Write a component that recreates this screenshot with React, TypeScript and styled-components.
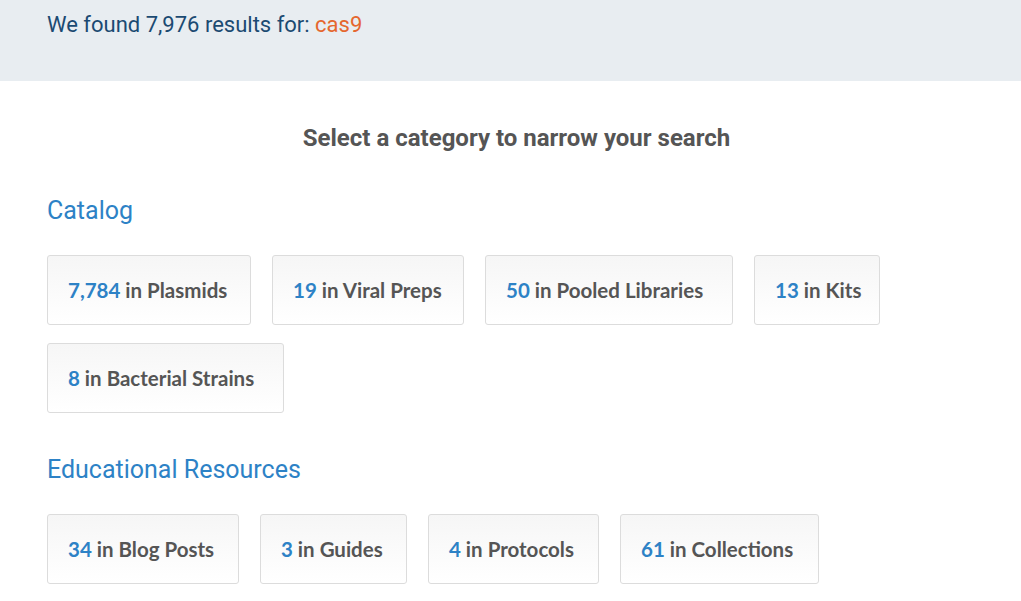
import React from "react";
import styled, { createGlobalStyle } from "styled-components";

const GlobalStyle = createGlobalStyle`
  body {
    margin: 0;
    background: #fff;
    font-family: Roboto, "Liberation Sans", sans-serif;
  }
`;

interface Category {
  count: string;
  label: string;
  width: number;
}

const catalog: Category[] = [
  { count: "7,784", label: "Plasmids", width: 204 },
  { count: "19", label: "Viral Preps", width: 192 },
  { count: "50", label: "Pooled Libraries", width: 248 },
  { count: "13", label: "Kits", width: 126 },
  { count: "8", label: "Bacterial Strains", width: 237 },
];

const education: Category[] = [
  { count: "34", label: "Blog Posts", width: 192 },
  { count: "3", label: "Guides", width: 147 },
  { count: "4", label: "Protocols", width: 171 },
  { count: "61", label: "Collections", width: 199 },
];

export default function App() {
  return (
    <>
      <GlobalStyle />
      <Banner>
        <Found>
          We found 7,976 results for: <Query>cas9</Query>
        </Found>
      </Banner>
      <Main>
        <Prompt>Select a category to narrow your search</Prompt>
        <SectionTitle>Catalog</SectionTitle>
        <ButtonGrid>
          {catalog.map((c) => (
            <CategoryButton key={c.label} $width={c.width}>
              <Count>{c.count}</Count> in {c.label}
            </CategoryButton>
          ))}
        </ButtonGrid>
        <SectionTitle $top={43}>Educational Resources</SectionTitle>
        <ButtonGrid>
          {education.map((c) => (
            <CategoryButton key={c.label} $width={c.width}>
              <Count>{c.count}</Count> in {c.label}
            </CategoryButton>
          ))}
        </ButtonGrid>
      </Main>
    </>
  );
}

const Banner = styled.div`
  background: #e8edf1;
  height: 81px;
  padding: 11px 47px 0;
  box-sizing: border-box;
`;

const Found = styled.div`
  font-size: 22px;
  color: #1b4a72;
  line-height: 28px;
`;

const Query = styled.span`
  color: #e5672e;
`;

const Main = styled.div`
  padding: 42px 47px 0;
`;

const Prompt = styled.h2`
  margin: 0 0 44px;
  padding-left: 12px;
  text-align: center;
  font-size: 24px;
  font-weight: 700;
  color: #555;
  line-height: 30px;
`;

const SectionTitle = styled.h3<{ $top?: number }>`
  margin: ${(p) => p.$top ?? 0}px 0 30px;
  font-size: 25px;
  font-weight: 400;
  color: #2d82c6;
  line-height: 28px;
`;

const ButtonGrid = styled.div`
  display: flex;
  flex-wrap: wrap;
  gap: 18px 21px;
  max-width: 860px;
`;

const CategoryButton = styled.button<{ $width: number }>`
  width: ${(p) => p.$width}px;
  height: 70px;
  padding: 0 20px;
  box-sizing: border-box;
  display: flex;
  align-items: center;
  justify-content: flex-start;
  white-space: pre;
  border: 1px solid #dcdcdc;
  border-radius: 3px;
  background: linear-gradient(#f6f6f6, #fff);
  font-family: Lato, "Open Sans", sans-serif;
  font-size: 20.5px;
  font-weight: 700;
  color: #555;
  cursor: pointer;
`;

const Count = styled.span`
  color: #2d82c6;
`;
